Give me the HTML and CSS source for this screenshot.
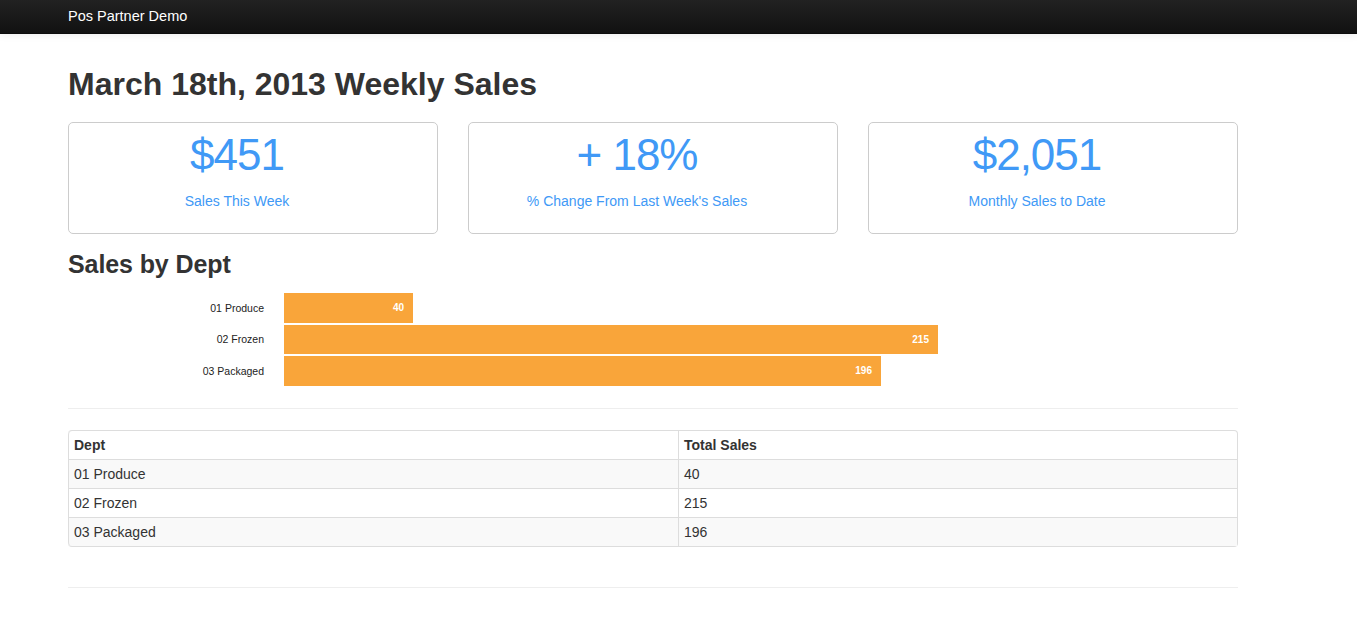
FILE: index.html
```html
<!DOCTYPE html>
<html>
<head>
<meta charset="utf-8">
<title>Pos Partner Demo</title>
<link rel="stylesheet" href="styles.css">
</head>
<body>
<div class="navbar">
  <div class="container">
    <a class="brand" href="#">Pos Partner Demo</a>
  </div>
</div>
<div class="container">
  <h1 class="page-title">March 18th, 2013 Weekly Sales</h1>
  <div class="stats">
    <div class="stat">
      <div class="stat-value">$451</div>
      <div class="stat-label">Sales This Week</div>
    </div>
    <div class="stat">
      <div class="stat-value">+ 18%</div>
      <div class="stat-label">% Change From Last Week's Sales</div>
    </div>
    <div class="stat">
      <div class="stat-value">$2,051</div>
      <div class="stat-label">Monthly Sales to Date</div>
    </div>
  </div>
  <h2 class="section-title">Sales by Dept</h2>
  <div class="chart">
    <div class="chart-row">
      <div class="chart-label">01 Produce</div>
      <div class="bar" style="width:129px">40</div>
    </div>
    <div class="chart-row">
      <div class="chart-label">02 Frozen</div>
      <div class="bar" style="width:654px">215</div>
    </div>
    <div class="chart-row">
      <div class="chart-label">03 Packaged</div>
      <div class="bar" style="width:597px">196</div>
    </div>
  </div>
  <hr class="rule">
  <table class="data-table">
    <colgroup><col class="col-dept"><col></colgroup>
    <thead>
      <tr><th>Dept</th><th>Total Sales</th></tr>
    </thead>
    <tbody>
      <tr><td>01 Produce</td><td>40</td></tr>
      <tr><td>02 Frozen</td><td>215</td></tr>
      <tr><td>03 Packaged</td><td>196</td></tr>
    </tbody>
  </table>
  <hr class="rule footer-rule">
</div>
</body>
</html>
```
FILE: styles.css
```css
* { box-sizing: border-box; }
body {
  margin: 0;
  font-family: "Liberation Sans", Arial, sans-serif;
  font-size: 14px;
  line-height: 20px;
  color: #333;
  background: #fff;
}
.container {
  width: 1170px;
  margin-left: 68px;
}
.navbar {
  height: 34px;
  background: linear-gradient(#222, #111);
  border-bottom: 1px solid #0c0c0c;
  box-shadow: 0 1px 8px rgba(0,0,0,0.08);
}
.brand {
  display: block;
  color: #fff;
  text-decoration: none;
  font-size: 14.5px;
  line-height: 33px;
  letter-spacing: 0;
}
.page-title {
  margin: 30px 0 0;
  font-size: 32px;
  line-height: 40px;
  font-weight: bold;
  color: #333;
  letter-spacing: 0;
}
.stats {
  display: flex;
  gap: 30px;
  margin-top: 18px;
}
.stat {
  width: 370px;
  height: 112px;
  border: 1px solid #ccc;
  border-radius: 5px;
  text-align: center;
  padding: 8px 32px 0 0;
  color: #4099f6;
}
.stat-value {
  font-size: 44px;
  line-height: 48px;
  letter-spacing: -1px;
}
.stat-label {
  margin-top: 12px;
  font-size: 14px;
  line-height: 20px;
}
.section-title {
  margin: 15px 0 0;
  font-size: 25px;
  line-height: 30px;
  font-weight: bold;
  color: #333;
  letter-spacing: -0.1px;
}
.chart {
  margin-top: 14px;
  display: flex;
  flex-direction: column;
  gap: 2px;
}
.chart-row {
  display: flex;
  align-items: center;
  height: 29.5px;
}
.chart-label {
  width: 196px;
  text-align: right;
  font-size: 10.5px;
  color: #222;
  margin-right: 20px;
}
.bar {
  height: 100%;
  background: #f9a53a;
  color: #fff;
  font-size: 10px;
  font-weight: bold;
  text-align: right;
  padding-right: 9px;
  line-height: 29px;
}
.rule {
  border: 0;
  border-top: 1px solid #eee;
  margin: 22px 0 21px;
}
.data-table {
  width: 100%;
  border-collapse: separate;
  border-spacing: 0;
  border: 1px solid #ddd;
  border-left: 0;
  border-radius: 4px;
  table-layout: fixed;
}
.col-dept { width: 610px; }
.data-table th,
.data-table td {
  text-align: left;
  padding: 4px 5px;
  line-height: 20px;
  border-left: 1px solid #ddd;
  border-top: 1px solid #ddd;
}
.data-table th { border-top: 0; font-weight: bold; }
.data-table tbody tr:nth-child(odd) td { background: #f9f9f9; }
.data-table tbody tr:last-child td:first-child { border-bottom-left-radius: 4px; }
.data-table thead th:first-child { border-top-left-radius: 4px; }
.footer-rule { margin-top: 40px; }
```
